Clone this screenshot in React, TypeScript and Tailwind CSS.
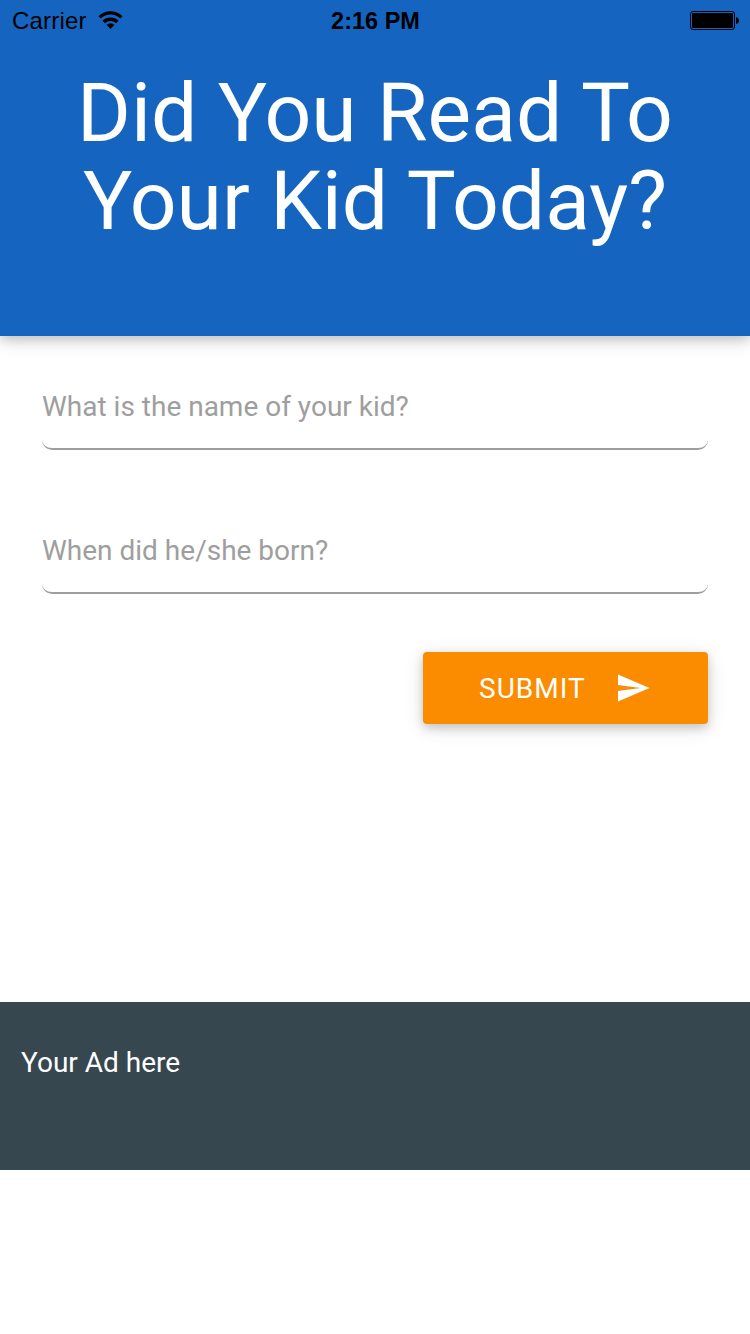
const fieldClass =
  "flex h-[86px] items-center rounded-[10px] border-b-2 border-[#9e9e9e] pt-[2px] text-[28px] text-[#9e9e9e]";

export default function App() {
  return (
    <div className="h-[1334px] w-[750px] overflow-hidden bg-white font-[Roboto,sans-serif]">
      <header className="relative flex h-[336px] flex-col bg-[#1565c0] shadow-[0_4px_10px_rgba(0,0,0,0.16),0_4px_20px_rgba(0,0,0,0.12)]">
        <div className="grid h-10 grid-cols-3 items-center pl-3 pr-[11px] pt-[1px] font-['Liberation_Sans',sans-serif] text-black">
          <div className="flex items-center gap-[10px]">
            <span className="text-[24px] leading-[39px] tracking-[0.2px]">Carrier</span>
            <svg className="mb-[2px]" width="27" height="18" viewBox="0 0 26 18">
              <path d="M1 5.2a17.2 17.2 0 0 1 24 0l-2.3 2.4a13.8 13.8 0 0 0-19.4 0z" />
              <path d="M5 9.8a11.4 11.4 0 0 1 16 0l-2.4 2.4a8 8 0 0 0-11.2 0z" />
              <path d="M13 18l-4-4.2a5.8 5.8 0 0 1 8 0z" />
            </svg>
          </div>
          <span className="pt-[2px] text-center text-[23.5px] font-bold leading-[37px]">2:16 PM</span>
          <svg className="justify-self-end" width="49" height="19" viewBox="0 0 49 19">
            <rect x="0.5" y="0.5" width="44" height="18" rx="2.5" fill="none" stroke="black" />
            <rect x="2" y="2" width="41" height="15" rx="1" />
            <path d="M46 6c4 1 4 6 0 7z" />
          </svg>
        </div>
        <h1 className="mt-[29px] text-center text-[82.2px] leading-[88px] text-white">
          Did You Read To
          <br />
          Your Kid Today?
        </h1>
      </header>
      <main className="flex h-[666px] flex-col px-[42px] pt-[28px]">
        <div className={fieldClass}>What is the name of your kid?</div>
        <div className={`mt-[58px] ${fieldClass}`}>When did he/she born?</div>
        <button className="mt-[58px] flex h-[72px] w-[285px] items-center self-end rounded bg-[#fb8c00] pl-14 text-[28px] tracking-[1px] text-white shadow-[0_4px_10px_rgba(0,0,0,0.16),0_4px_20px_rgba(0,0,0,0.12)]">
          <span className="pt-[2px]">SUBMIT</span>
          <svg className="ml-[29px]" width="36" height="36" viewBox="0 0 24 24" fill="white">
            <path d="M2.01 21L23 12 2.01 3 2 10l15 2-15 2z" />
          </svg>
        </button>
      </main>
      <footer className="h-[168px] bg-[#37474f] pl-[21px] pt-[40px] text-[28px] leading-[42px] text-white">Your Ad here</footer>
    </div>
  );
}
